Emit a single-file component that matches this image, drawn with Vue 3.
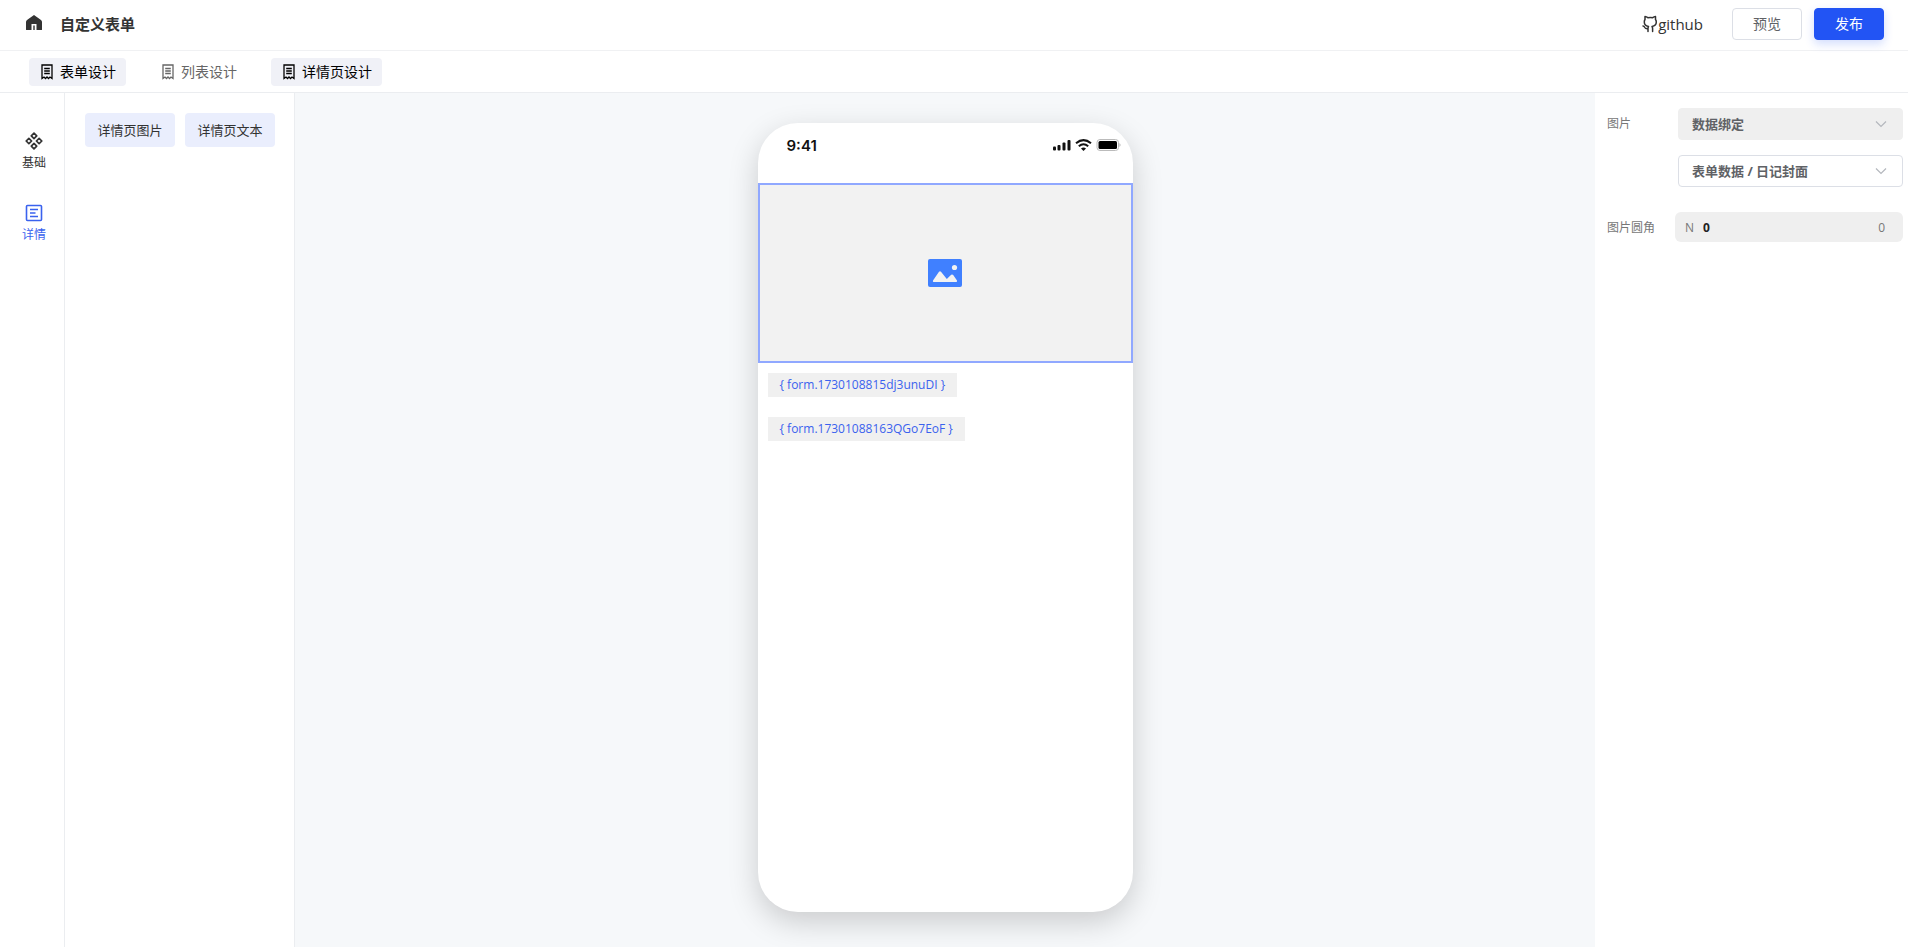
<script setup>
import { ref } from 'vue'

const tabs = [
  { name: '表单设计', on: true },
  { name: '列表设计', on: false },
  { name: '详情页设计', on: true },
]
const widgets = ['详情页图片', '详情页文本']
const fields = ['{ form.1730108815dj3unuDI }', '{ form.17301088163QGo7EoF }']
const source = ref('数据绑定')
const binding = ref('表单数据 / 日记封面')
const radius = ref('0')
</script>

<template>
  <div class="app">
    <header class="header">
      <a href="#" class="home" aria-label="首页">
        <svg width="18" height="18" viewBox="0 0 18 18">
          <path fill="#333" d="M9 1 L16 6 Q17 6.800 17 8 V15.500 Q17 16 16.400 16 H11.500 V10 H6.500 V16 H1.600 Q1 16 1 15.500 V8 Q1 6.800 2 6 Z M8.300 11.500 H9.700 V16 H8.300 Z" />
        </svg>
      </a>
      <h1 class="title">自定义表单</h1>
      <a href="#" class="github">
        <svg width="16" height="18" viewBox="0 0 16 18" fill="none" stroke="#333" stroke-width="1.500" stroke-linejoin="round" stroke-linecap="round">
          <path d="M6 16.500 V13.500 Q6 12.300 6.500 11.500 Q2.300 10.800 2.300 7 Q2.300 5.500 3 4.500 V1.500 Q4.500 1.700 5.800 2.700 Q8.500 2.200 10.700 2.700 Q12 1.700 13.500 1.500 V4.500 Q14.300 5.500 14.300 7 Q14.300 10.800 10 11.500 Q10.600 12.300 10.600 13.500 V16.500 M1 11 Q2.300 11.300 2.800 12.500 Q3.500 14 6 13.700" />
        </svg>
        <span>github</span>
      </a>
      <button type="button" class="btn">预览</button>
      <button type="button" class="btn primary">发布</button>
    </header>

    <nav class="tabs">
      <button v-for="t in tabs" :key="t.name" type="button" class="tab" :class="{ on: t.on }">
        <svg width="12" height="16" viewBox="0 0 12 16" fill="none" stroke="currentColor" stroke-width="1.300">
          <path d="M1 1 H11 V14.500 L9 13 L7.500 14.500 L6 13 L4.500 14.500 L3 13 L1 14.500 Z M3.200 4.500 H8.800 M3.200 7 H8.800 M3.200 9.500 H8.800" />
        </svg>
        <span>{{ t.name }}</span>
      </button>
    </nav>

    <div class="body">
      <aside class="rail">
        <button type="button" class="rail-item">
          <svg width="18" height="18" viewBox="0 0 18 18" fill="none" stroke="currentColor" stroke-width="1.700" stroke-linejoin="round">
            <path d="M9 1.200 L11.700 3.900 L9 6.600 L6.300 3.900 Z M9 11.400 L11.700 14.100 L9 16.800 L6.300 14.100 Z M3.900 6.300 L6.600 9 L3.900 11.700 L1.200 9 Z M14.100 6.300 L16.800 9 L14.100 11.700 L11.400 9 Z" />
          </svg>
          <span>基础</span>
        </button>
        <button type="button" class="rail-item active">
          <svg width="18" height="18" viewBox="0 0 18 18" fill="none" stroke="currentColor" stroke-width="1.600">
            <rect x="1.500" y="1.500" width="15" height="15" rx="1" />
            <path d="M5 5.500 H13 M5 9 H10.500 M5 12.500 H13" />
          </svg>
          <span>详情</span>
        </button>
      </aside>

      <section class="widgets">
        <button v-for="w in widgets" :key="w" type="button" class="widget">{{ w }}</button>
      </section>

      <main class="canvas">
        <div class="phone">
          <div class="status">
            <span class="time">9:41</span>
            <svg width="70" height="14" viewBox="0 0 70 14">
              <g fill="#111">
                <rect x="1" y="8.500" width="3" height="4" rx="1" />
                <rect x="5.500" y="7" width="3" height="5.500" rx="1" />
                <rect x="10.500" y="4.500" width="3" height="8" rx="1" />
                <rect x="15.500" y="2" width="3" height="10.500" rx="1" />
              </g>
              <g fill="none" stroke="#111" stroke-width="2">
                <path d="M24 5.300 Q31.500 -1 39 5.300" />
                <path d="M26.800 8.300 Q31.500 4.300 36.200 8.300" />
              </g>
              <path fill="#111" d="M29 10.400 Q31.500 8.400 34 10.400 L31.500 13 Z" />
              <rect x="45" y="1.500" width="21.500" height="11" rx="3" fill="#fff" stroke="#bbb" />
              <rect x="46.500" y="3" width="18.500" height="8" rx="1.500" fill="#000" />
              <path fill="#aaa" d="M67.500 5 Q69.500 7 67.500 9 Z" />
            </svg>
          </div>
          <div class="picture">
            <svg width="34" height="28" viewBox="0 0 34 28">
              <rect width="34" height="28" rx="2" fill="#4080ff" />
              <circle cx="26.500" cy="8.500" r="2.600" fill="#f2f2f2" />
              <path fill="#f2f2f2" d="M5 21.500 L11 12.800 Q12 11.700 13 12.800 L18.800 20 L23.200 15.800 Q24.200 15 25.200 15.900 L29 21.500 Q29.300 23 28.200 23 H5.800 Q4.500 23 5 21.500 Z" />
            </svg>
          </div>
          <div class="fields">
            <span v-for="f in fields" :key="f" class="field">{{ f }}</span>
          </div>
        </div>
      </main>

      <aside class="props">
        <div class="prop">
          <label for="source" class="prop-label">图片</label>
          <div class="stack">
            <div class="select filled">
              <select id="source" v-model="source"><option>数据绑定</option></select>
              <svg width="12" height="8" viewBox="0 0 12 8" fill="none" stroke="#b4b7bd" stroke-width="1.200"><path d="M1 1.500 L6 6.500 L11 1.500" /></svg>
            </div>
            <div class="select">
              <select v-model="binding" aria-label="绑定字段"><option>表单数据 / 日记封面</option></select>
              <svg width="12" height="8" viewBox="0 0 12 8" fill="none" stroke="#b4b7bd" stroke-width="1.200"><path d="M1 1.500 L6 6.500 L11 1.500" /></svg>
            </div>
          </div>
        </div>
        <div class="prop corner">
          <label for="radius" class="prop-label">图片圆角</label>
          <div class="number">
            <span>N</span>
            <input id="radius" v-model="radius" type="text" />
            <span>0</span>
          </div>
        </div>
      </aside>
    </div>
  </div>
</template>

<style>
body {
  margin: 0;
}
</style>

<style scoped>
.app,
.app * {
  box-sizing: border-box;
}
.app {
  display: flex;
  flex-direction: column;
  min-height: 100vh;
  background: #fff;
  color: #333;
  font-family: "Open Sans", "Noto Sans CJK SC", sans-serif;
  font-size: 14px;
}
button,
input,
select {
  margin: 0;
  border: 0;
  font: inherit;
  color: inherit;
}
button {
  padding: 0;
  background: none;
  cursor: pointer;
}
a {
  color: inherit;
  text-decoration: none;
}
svg {
  display: block;
  flex: none;
}
.header {
  display: flex;
  align-items: center;
  height: 51px;
  padding: 0 24px 2px 25px;
  border-bottom: 1px solid #f0f1f3;
}
.title {
  margin: 0 auto 0 17px;
  font-size: 15px;
  line-height: 20px;
  font-weight: 600;
}
.home {
  padding-bottom: 2px;
}
.github {
  display: flex;
  align-items: center;
  margin-right: 29px;
  font-size: 15px;
}
.btn {
  width: 70px;
  height: 32px;
  padding-bottom: 2px;
  border: 1px solid #dcdfe6;
  border-radius: 4px;
  color: #606266;
}
.btn.primary {
  margin-left: 12px;
  border-color: #2254f4;
  background: #2254f4;
  color: #fff;
  box-shadow: 0 4px 10px rgba(34, 84, 244, 0.2);
}
.tabs {
  display: flex;
  align-items: center;
  gap: 24px;
  height: 42px;
  padding: 0 29px;
  border-bottom: 1px solid #ebedf0;
}
.tab {
  display: flex;
  align-items: center;
  gap: 7px;
  height: 28px;
  padding: 0 10px 0 12px;
  border-radius: 4px;
  color: #666;
}
.tab span {
  padding-bottom: 2px;
}
.tab.on {
  background: #f0f1f7;
  color: #000;
}
.body {
  display: flex;
  flex: 1;
}
.rail {
  display: flex;
  flex-direction: column;
  gap: 32px;
  width: 65px;
  padding: 39px 0 0 4px;
  border-right: 1px solid #ebedf0;
}
.rail-item {
  display: flex;
  flex-direction: column;
  align-items: center;
  gap: 4px;
  font-size: 12px;
  line-height: 18px;
}
.rail-item.active {
  color: #3a62ee;
}
.widgets {
  display: flex;
  align-items: flex-start;
  gap: 10px;
  width: 230px;
  padding: 20px 19px 20px 20px;
  border-right: 1px solid #ebedf0;
}
.widget {
  flex: 1;
  height: 34px;
  padding-bottom: 2px;
  border-radius: 4px;
  background: #eaeefd;
  font-size: 13px;
}
.canvas {
  display: flex;
  flex: 1;
  justify-content: center;
  padding: 30px 0 35px;
  background: #f6f8fa;
}
.phone {
  display: flex;
  flex-direction: column;
  width: 375px;
  border-radius: 40px;
  background: #fff;
  box-shadow: 0 10px 30px rgba(0, 0, 0, 0.18);
}
.status {
  display: flex;
  align-items: center;
  justify-content: space-between;
  height: 60px;
  padding: 0 11px 16px 29px;
}
.time {
  font-family: Inter, sans-serif;
  font-size: 15px;
  font-weight: 600;
  color: #111;
}
.picture {
  display: flex;
  align-items: center;
  justify-content: center;
  height: 180px;
  border: 2px solid #90a8ff;
  background: #f2f2f2;
}
.fields {
  display: flex;
  flex-direction: column;
  align-items: flex-start;
  gap: 20px;
  padding: 10px;
}
.field {
  padding: 0 12px;
  background: #f0f0f0;
  color: #3a62ee;
  font-size: 12px;
  line-height: 24px;
}
.props {
  width: 313px;
  padding: 15px 5px 0 12px;
}
.prop {
  display: flex;
  justify-content: space-between;
}
.prop-label {
  padding-top: 7px;
  color: #777;
  font-size: 12px;
  line-height: 18px;
}
.stack {
  display: flex;
  flex-direction: column;
  gap: 15px;
  width: 225px;
}
.select {
  display: grid;
  align-items: center;
  height: 32px;
  border: 1px solid #dcdfe6;
  border-radius: 4px;
  color: #606266;
}
.select.filled {
  border-color: #efefef;
  background: #efefef;
}
.select select,
.select svg {
  grid-area: 1 / 1;
}
.select select {
  appearance: none;
  width: 100%;
  height: 30px;
  padding: 0 36px 0 13px;
  background: none;
  outline: none;
  font-size: 13px;
  font-weight: 700;
}
.select svg {
  justify-self: end;
  margin-right: 15px;
  pointer-events: none;
}
.corner {
  margin-top: 25px;
}
.number {
  display: flex;
  align-items: center;
  gap: 9px;
  width: 228px;
  height: 30px;
  padding: 0 18px 0 10px;
  border-radius: 6px;
  background: #efefef;
  color: #777;
  font-size: 12px;
}
.number input {
  flex: 1;
  min-width: 0;
  padding: 0;
  background: none;
  outline: none;
  color: #222;
  font-weight: 700;
}
</style>
